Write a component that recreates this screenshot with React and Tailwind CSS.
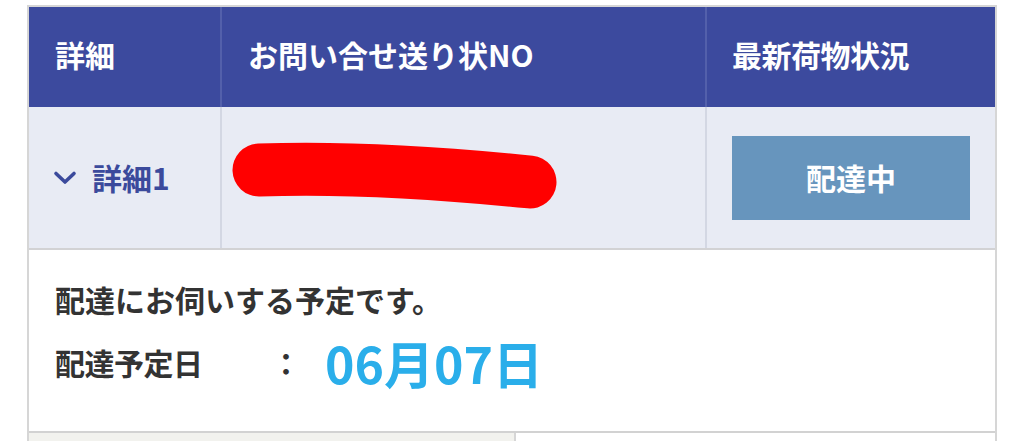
import React from "react";

const jp = { fontFamily: '"Noto Sans CJK JP", "Noto Sans", sans-serif' };

const Chevron = () => (
  <svg width="24" height="16" viewBox="0 0 24 16" className="text-[#3b4a9c]">
    <path d="M3 3.5 L12 12 L21 3.5" fill="none" stroke="currentColor" strokeWidth="3.6" strokeLinecap="round" strokeLinejoin="round" />
  </svg>
);

const Scribble = () => (
  <svg width="340" height="80" viewBox="0 0 340 80">
    <path d="M37 32 Q 150 28 308 44" fill="none" stroke="#ff0000" strokeWidth="53" strokeLinecap="round" />
  </svg>
);

const App = () => {
  return (
    <div className="w-[1024px] h-[441px] bg-white overflow-hidden pl-[27px] pt-[5px]" style={jp}>
      <div className="w-[970px] border-x-2 border-t-2 border-[#d6d6d6]">
        {/* header */}
        <div className="grid grid-cols-[193px_485px_1fr] h-[100px] bg-[#3c4a9e] text-white font-bold text-[30px]">
          <div className="flex items-center pl-[26px] pb-[6px] border-r-2 border-[#5360ab]">詳細</div>
          <div className="flex items-center pl-[26px] pb-[6px] border-r-2 border-[#5360ab]">お問い合せ送り状NO</div>
          <div className="flex items-center pl-[25px] pb-[6px] tracking-[-0.5px]">最新荷物状況</div>
        </div>

        {/* row */}
        <div className="grid grid-cols-[193px_485px_1fr] h-[143px] bg-[#e8ebf4] border-b-2 border-[#d2d2d4]">
          <div className="flex items-center pl-[24px] gap-[15px] border-r-2 border-[#d3d7e3] text-[#3b4a9c] font-bold text-[30px]">
            <Chevron />
            <span>詳細1</span>
          </div>
          <div className="flex items-center border-r-2 border-[#d3d7e3]">
            <Scribble />
          </div>
          <div className="flex items-center pl-[25px]">
            <div className="w-[238px] h-[84px] bg-[#6795bd] flex items-center justify-center text-white font-bold text-[30px]">
              配達中
            </div>
          </div>
        </div>

        {/* detail */}
        <div className="h-[181px] flex flex-col pl-[26px] pt-[30px] text-[#333333] font-bold">
          <p className="text-[30px] leading-[38px]">配達にお伺いする予定です。</p>
          <div className="flex items-center mt-[14px]">
            <span className="text-[30px] w-[216px] tracking-[-0.5px]">配達予定日</span>
            <span className="text-[30px] w-[54px]">：</span>
            <span className="text-[50px] text-[#2aaeea] leading-[60px]">06月07日</span>
          </div>
        </div>

        {/* next row */}
        <div className="grid grid-cols-[487px_1fr] h-[20px] border-t-2 border-[#d2d2d2]">
          <div className="bg-[#f2f2ee] border-r-2 border-[#d6d6d6]"></div>
          <div className="bg-white"></div>
        </div>
      </div>
    </div>
  );
};

export default App;
